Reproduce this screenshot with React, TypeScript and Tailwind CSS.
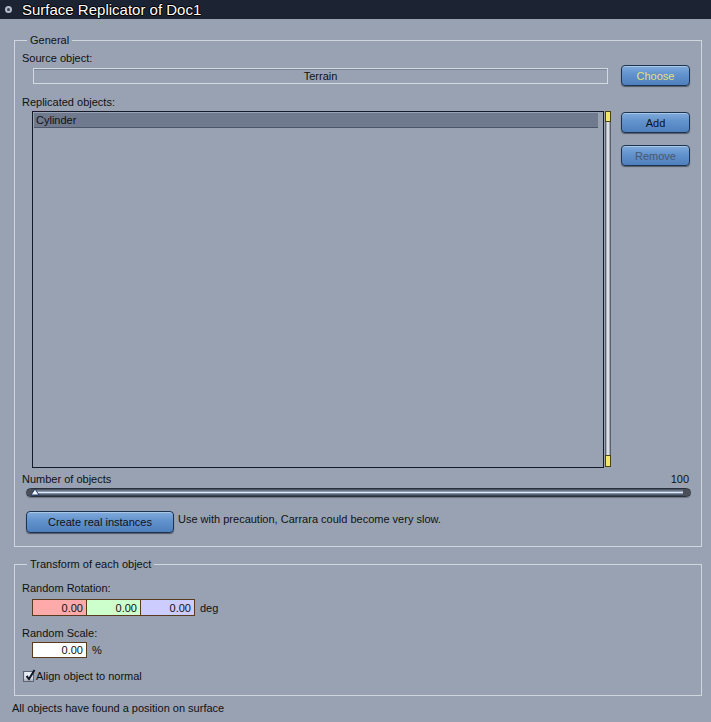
import React from "react";

const btn =
  "flex items-center justify-center rounded-[4px] border border-[#1b3452] bg-[linear-gradient(to_bottom,#80aadb,#6192cc_45%,#4f80bd)] shadow-[inset_0_1px_0_rgba(255,255,255,0.35),0_1px_1px_rgba(0,0,0,0.45)] text-[11px]";

function NumField({ bg, value }: { bg: string; value: string }) {
  return (
    <div
      className={`w-[55px] h-[17px] border border-[#5a3a1c] -ml-px first:ml-0 flex items-center justify-end pr-[3px] text-[11px] text-[#111] ${bg}`}
    >
      {value}
    </div>
  );
}

export default function App() {
  return (
    <div className="w-[711px] h-[722px] bg-[#98a2b3] font-['Liberation_Sans',Arial,sans-serif] text-[11px] leading-[14px] text-[#111] overflow-hidden">
      {/* Title bar */}
      <div className="h-[19px] bg-[#1c2332] flex items-center gap-[10px] pl-[5px]">
        <div className="w-[7px] h-[7px] rounded-full border-[2px] border-[#b4bccb] bg-[#3a4254]" />
        <span className="text-white text-[15px] leading-[19px] [text-shadow:-1px_0_0_#000,1px_0_0_#000,0_-1px_0_#000,0_1px_0_#000]">
          Surface Replicator of Doc1
        </span>
      </div>

      <div className="pl-[14px] pr-[9px] pt-[14px]">
        {/* General */}
        <fieldset className="border border-[#d0d5de] h-[514px] pl-[7px] pr-[11px]">
          <legend className="ml-[5px] px-[3px] text-[11px] leading-[14px]">
            General
          </legend>

          <div className="flex gap-[10px] pt-[4px]">
            <div className="flex-1">
              <div>Source object:</div>
              <div className="ml-[11px] mr-[3px] mt-[3px] h-[16px] border border-[#d4d8e0] shadow-[inset_0_1px_0_#7d8698] flex items-center justify-center text-[#111]">
                Terrain
              </div>

              <div className="mt-[11px]">Replicated objects:</div>
              <div className="flex ml-[10px] mt-[2px] gap-[1px]">
                <div className="flex-1 h-[357px] border border-[#141a28] p-px">
                  <div className="h-[15px] mr-[4px] bg-[#6f7a8e] border-b border-[#4c5569] pl-[2px] leading-[14px]">
                    Cylinder
                  </div>
                </div>
                <div className="relative w-[6px] h-[356px] border border-[#5a6070] bg-[linear-gradient(to_right,#9098a4,#f4f6f8_50%,#8a909c)]">
                  <div className="absolute -left-px -right-px top-[-1px] h-[11px] bg-[#f3e86a] border border-[#4a4410]" />
                  <div className="absolute -left-px -right-px bottom-[-1px] h-[12px] bg-[#f3e86a] border border-[#4a4410]" />
                </div>
              </div>
            </div>

            <div className="w-[69px] flex flex-col pt-[14px]">
              <div className={`${btn} h-[21px] text-[#e6e074]`}>Choose</div>
              <div className={`${btn} h-[21px] mt-[26px] text-[#111]`}>Add</div>
              <div className={`${btn} h-[21px] mt-[12px] text-[#4a5870]`}>
                Remove
              </div>
            </div>
          </div>

          {/* Number of objects */}
          <div className="flex justify-between mt-[4px] pr-[1px]">
            <span>Number of objects</span>
            <span>100</span>
          </div>
          <div className="relative ml-[4px] mr-[-1px] mt-[2px] h-[9px] rounded-full border border-[#2a303c] bg-[linear-gradient(to_bottom,#3c4352,#8796ad_35%,#e4ebf3_50%,#7787a0_65%,#2c3240)] shadow-[0_1px_1px_rgba(0,0,0,0.3)]">
            <div className="absolute left-0 top-0 bottom-0 w-[8px] rounded-l-full bg-[#4a4e56]" />
            <div className="absolute right-0 top-0 bottom-0 w-[7px] rounded-r-full bg-[#4a4e56]" />
            <svg
              className="absolute left-[3px] top-[-1px]"
              width="10"
              height="8"
              viewBox="0 0 10 8"
            >
              <path d="M5 1 L9 7 L1 7 Z" fill="#f4f8ff" stroke="#1e3c6c" strokeWidth="1" />
            </svg>
          </div>

          <div className="flex items-start gap-[4px] mt-[14px] ml-[4px]">
            <div className={`${btn} w-[148px] h-[22px] text-[#111]`}>
              Create real instances
            </div>
            <span className="mt-[1px]">
              Use with precaution, Carrara could become very slow.
            </span>
          </div>
        </fieldset>

        {/* Transform */}
        <fieldset className="border border-[#d0d5de] h-[139px] mt-[10px] pl-[7px] pr-[11px]">
          <legend className="ml-[5px] px-[3px] text-[11px] leading-[14px]">
            Transform of each object
          </legend>
          <div className="pt-[10px]">Random Rotation:</div>
          <div className="flex items-center ml-[10px] mt-[4px]">
            <NumField bg="bg-[#ffaaaa]" value="0.00" />
            <NumField bg="bg-[#ccffcc]" value="0.00" />
            <NumField bg="bg-[#ccccff]" value="0.00" />
            <span className="ml-[5px]">deg</span>
          </div>
          <div className="mt-[10px]">Random Scale:</div>
          <div className="flex items-center ml-[10px] mt-[2px]">
            <div className="w-[55px] h-[16px] border border-[#5a3a1c] bg-white flex items-center justify-end pr-[3px]">
              0.00
            </div>
            <span className="ml-[5px]">%</span>
          </div>
          <div className="flex items-center mt-[11px] ml-[1px]">
            <div className="w-[11px] h-[11px] bg-[#e8ecf4] border border-[#5a6478] shadow-[inset_0_-2px_2px_rgba(0,0,0,0.25)] relative">
              <svg
                className="absolute left-[1px] top-[-3px]"
                width="11"
                height="12"
                viewBox="0 0 11 12"
              >
                <path
                  d="M1.5 7 L4 10 L9.5 1"
                  fill="none"
                  stroke="#101828"
                  strokeWidth="2"
                />
              </svg>
            </div>
            <span className="ml-[2px]">Align object to normal</span>
          </div>
        </fieldset>
      </div>

      <div className="pl-[12px] pt-[5px]">
        All objects have found a position on surface
      </div>
    </div>
  );
}
